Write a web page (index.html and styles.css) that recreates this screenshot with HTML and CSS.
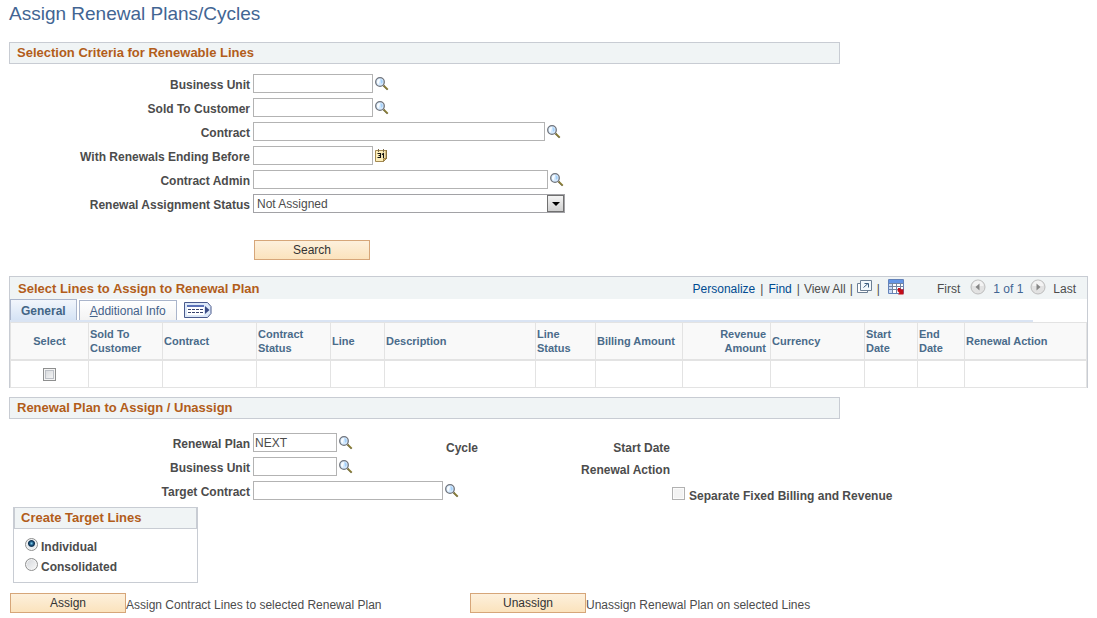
FILE: index.html
```html
<!DOCTYPE html>
<html lang="en">
	<head>
		<meta charset="UTF-8" />
		<meta name="viewport" content="width=device-width, initial-scale=1.0" />
		<title>Assign Renewal Plans/Cycles</title>
		<link rel="stylesheet" href="styles.css">
	</head>
	<body>
		<!-- Shared icons -->
		<svg class="icon-defs" width="0" height="0" aria-hidden="true">
			<symbol id="icon-lookup" viewBox="0 0 14 14">
				<path d="M8.500 8.500L12.700 12.700" stroke="#6e6530" stroke-width="1.9" />
				<path d="M9.500 8.900L12.600 12" stroke="#b5a74e" stroke-width="0.8" />
				<circle cx="5" cy="5" r="4.300" fill="#d5eafe" stroke="#70747c" stroke-width="1.300" />
				<path d="M2 5.500a3.200 3.200 0 0 1 3.200-3.500L3.500 7.800z" fill="#fafdff" />
				<path d="M5.500 2a3.200 3.200 0 0 1 2.300 3.300L6 7z" fill="#a5d1fb" />
			</symbol>
			<symbol id="icon-calendar" viewBox="0 0 14 14">
				<path d="M0.500 1.500h10.500v8l-2.500 3h-8z" fill="#fdeeba" stroke="#a48a52" />
				<path d="M8.500 12.500v-3h3z" fill="#d9b561" stroke="#8c7340" stroke-width="0.8" />
				<path d="M11.500 1v9" stroke="#8c7340" />
				<path d="M3.500 0v3M8.500 0v3" stroke="#7f6d4a" />
				<path d="M2.500 4.500h3v4h-3M3.500 6.500h2M7 5.500l1.500-1v4.500" fill="none" stroke="#111" stroke-width="1.1" />
			</symbol>
			<symbol id="icon-prev" viewBox="0 0 16 16">
				<circle cx="8" cy="8" r="7" fill="#e2e2e2" stroke="#bcbcbc" />
				<path d="M2.500 7a5.500 5.500 0 0 1 11 0z" fill="#f3f3f3" />
				<path d="M9.500 4.500v7l-4-3.500z" fill="#858585" />
			</symbol>
			<symbol id="icon-next" viewBox="0 0 16 16">
				<circle cx="8" cy="8" r="7" fill="#e2e2e2" stroke="#bcbcbc" />
				<path d="M2.500 7a5.500 5.500 0 0 1 11 0z" fill="#f3f3f3" />
				<path d="M6.500 4.500v7l4-3.500z" fill="#858585" />
			</symbol>
		</svg>

		<h1>Assign Renewal Plans/Cycles</h1>

		<form class="page-form">
			<section class="criteria">
				<h2 class="section-title">Selection Criteria for Renewable Lines</h2>
				<div class="fields">
					<div class="field">
						<label for="businessUnit">Business Unit</label>
						<input type="text" id="businessUnit" class="w-small" />
						<button type="button" class="icon-button" aria-label="Look up Business Unit"><svg><use href="#icon-lookup" /></svg></button>
					</div>
					<div class="field">
						<label for="soldTo">Sold To Customer</label>
						<input type="text" id="soldTo" class="w-small" />
						<button type="button" class="icon-button" aria-label="Look up Sold To Customer"><svg><use href="#icon-lookup" /></svg></button>
					</div>
					<div class="field">
						<label for="contract">Contract</label>
						<input type="text" id="contract" class="w-large" />
						<button type="button" class="icon-button" aria-label="Look up Contract"><svg><use href="#icon-lookup" /></svg></button>
					</div>
					<div class="field">
						<label for="endingBefore">With Renewals Ending Before</label>
						<input type="text" id="endingBefore" class="w-small" />
						<button type="button" class="icon-button" aria-label="Choose a date"><svg><use href="#icon-calendar" /></svg></button>
					</div>
					<div class="field">
						<label for="contractAdmin">Contract Admin</label>
						<input type="text" id="contractAdmin" class="w-xlarge" />
						<button type="button" class="icon-button" aria-label="Look up Contract Admin"><svg><use href="#icon-lookup" /></svg></button>
					</div>
					<div class="field">
						<label for="status">Renewal Assignment Status</label>
						<span class="select-box">
							<select id="status">
								<option>Not Assigned</option>
								<option>Assigned</option>
							</select>
							<span class="select-arrow"></span>
						</span>
					</div>
				</div>
				<button type="button" class="button search-button">Search</button>
			</section>

			<section class="lines">
				<div class="lines-header">
					<h2>Select Lines to Assign to Renewal Plan</h2>
					<div class="lines-tools">
						<a href="#">Personalize</a>
						<span>|</span>
						<a href="#">Find</a>
						<span>|</span>
						<span>View All</span>
						<span>|</span>
						<button type="button" class="tool-button" aria-label="Zoom">
							<svg width="16" height="16" viewBox="0 0 16 16">
								<path d="M3.500 4.500h-3v9h10v-2" fill="#fff" stroke="#6c7f94" />
								<path d="M3.500 1.500h11v10h-11z" fill="#f4f9fc" stroke="#6c7f94" />
								<path d="M6.500 8.500L11 4.500M7.500 4.500h4v4" fill="none" stroke="#3d5e80" />
							</svg>
						</button>
						<span>|</span>
						<button type="button" class="tool-button download" aria-label="Download">
							<svg width="17" height="16" viewBox="0 0 17 16">
								<path d="M0.500 0.500h15v14h-15z" fill="#fff" stroke="#6483ba" />
								<path d="M1 1h14v3h-14z" fill="#6495e6" />
								<path d="M1 4h4v10h-4z" fill="#c9dbf8" />
								<path d="M1 4.500h14M1 7.500h14M1 10.500h14M4.500 4v10M8.500 4v10M12.500 4v10" stroke="#7385a2" />
								<path d="M10 9l2 0 2 2 1.500-1.500v6H10l1.500-1.500-2-2z" fill="#c40d18" />
							</svg>
						</button>
					</div>
					<div class="pager">
						<span class="pager-first">First</span>
						<button type="button" class="tool-button" aria-label="Previous"><svg width="16" height="16"><use href="#icon-prev" /></svg></button>
						<span class="pager-count">1 of 1</span>
						<button type="button" class="tool-button" aria-label="Next"><svg width="16" height="16"><use href="#icon-next" /></svg></button>
						<span>Last</span>
					</div>
				</div>
				<div class="tabs">
					<button type="button" class="tab active">General</button>
					<button type="button" class="tab"><u>A</u>dditional Info</button>
					<button type="button" class="show-columns" aria-label="Show all columns">
						<svg width="28" height="16" viewBox="0 0 28 16">
							<path d="M0.500 0.500h23l3.500 4v7l-3.500 4h-23z" fill="#dce8f8" stroke="#4a5a8c" />
							<path d="M3 3h17v10h-17z" fill="#fff" />
							<path d="M3 3h17v2h-17z" fill="#5b72b8" />
							<path d="M4 7.500h15M4 10.500h15" stroke="#39456f" stroke-dasharray="3 1" />
							<path d="M21 4l4.500 4-4.500 4z" fill="#3a4b86" />
						</svg>
					</button>
				</div>
				<table class="lines-table">
					<colgroup>
						<col class="c-select" />
						<col class="c-sold" />
						<col class="c-contract" />
						<col class="c-cstatus" />
						<col class="c-line" />
						<col class="c-desc" />
						<col class="c-lstatus" />
						<col class="c-billing" />
						<col class="c-revenue" />
						<col class="c-currency" />
						<col class="c-start" />
						<col class="c-end" />
						<col class="c-action" />
					</colgroup>
					<thead>
						<tr>
							<th class="center">Select</th>
							<th>Sold To Customer</th>
							<th>Contract</th>
							<th>Contract Status</th>
							<th>Line</th>
							<th>Description</th>
							<th>Line Status</th>
							<th>Billing Amount</th>
							<th class="right">Revenue Amount</th>
							<th>Currency</th>
							<th>Start Date</th>
							<th>End Date</th>
							<th>Renewal Action</th>
						</tr>
					</thead>
					<tbody>
						<tr>
							<td class="center"><input type="checkbox" aria-label="Select line" /></td>
							<td></td>
							<td></td>
							<td></td>
							<td></td>
							<td></td>
							<td></td>
							<td></td>
							<td></td>
							<td></td>
							<td></td>
							<td></td>
							<td></td>
						</tr>
					</tbody>
				</table>
			</section>

			<section class="plan">
				<h2 class="section-title">Renewal Plan to Assign / Unassign</h2>
				<div class="plan-body">
					<div class="fields plan-fields">
						<div class="field">
							<label for="renewalPlan">Renewal Plan</label>
							<input type="text" id="renewalPlan" class="w-tiny" value="NEXT" />
							<button type="button" class="icon-button" aria-label="Look up Renewal Plan"><svg><use href="#icon-lookup" /></svg></button>
						</div>
						<div class="field">
							<label for="planUnit">Business Unit</label>
							<input type="text" id="planUnit" class="w-tiny" />
							<button type="button" class="icon-button" aria-label="Look up Business Unit"><svg><use href="#icon-lookup" /></svg></button>
						</div>
						<div class="field">
							<label for="targetContract">Target Contract</label>
							<input type="text" id="targetContract" class="w-medium" />
							<button type="button" class="icon-button" aria-label="Look up Target Contract"><svg><use href="#icon-lookup" /></svg></button>
						</div>
					</div>
					<div class="plan-details">
						<div class="detail-row">
							<span class="cycle">Cycle</span>
							<span class="detail">Start Date</span>
						</div>
						<div class="detail-row">
							<span class="detail">Renewal Action</span>
						</div>
						<label class="separate">
							<input type="checkbox" disabled />
							<span>Separate Fixed Billing and Revenue</span>
						</label>
					</div>
				</div>
			</section>

			<fieldset class="target-lines" aria-labelledby="targetTitle">
				<h2 id="targetTitle">Create Target Lines</h2>
				<div class="radios">
					<label><input type="radio" name="target" checked /><span>Individual</span></label>
					<label><input type="radio" name="target" /><span>Consolidated</span></label>
				</div>
			</fieldset>

			<div class="actions">
				<div class="action">
					<button type="button" class="button">Assign</button>
					<span>Assign Contract Lines to selected Renewal Plan</span>
				</div>
				<div class="action">
					<button type="button" class="button">Unassign</button>
					<span>Unassign Renewal Plan on selected Lines</span>
				</div>
			</div>
		</form>
	</body>
</html>
```
FILE: styles.css
```css
* {
	box-sizing: border-box;
}
body {
	margin: 0;
	padding: 3px 9px 0;
	background: #fff;
	color: #4c4c4c;
	font-family: "Liberation Sans", Arial, sans-serif;
	font-size: 12px;
	line-height: 14px;
}
button,
input,
select {
	font-family: inherit;
	font-size: 12px;
	color: #4c4c4c;
	margin: 0;
}
button {
	padding: 0;
	cursor: pointer;
}
.icon-defs {
	position: absolute;
}
h1 {
	margin: 0 0 17px;
	color: #426593;
	font-size: 19px;
	font-weight: normal;
	line-height: 22px;
}
h2 {
	margin: 0;
	color: #b25d1a;
	font-size: 13px;
	line-height: 20px;
}
.section-title {
	width: 77%;
	padding-left: 7px;
	background: #f0f4f5;
	border: 1px solid #c8ccd3;
}

/* Labelled fields */
.fields {
	display: flex;
	flex-direction: column;
	gap: 5px;
	padding-top: 10px;
}
.field {
	display: flex;
	align-items: center;
	height: 19px;
}
.field > * {
	flex-shrink: 0;
}
.field label {
	width: 241px;
	margin-right: 3px;
	padding-top: 3px;
	font-weight: bold;
	text-align: right;
}
.field input {
	height: 19px;
	padding: 0 1px;
	border: 1px solid #b3b3b3;
}
.w-tiny {
	width: 84px;
}
.w-small {
	width: 120px;
}
.w-medium {
	width: 190px;
}
.w-large {
	width: 292px;
}
.w-xlarge {
	width: 295px;
}
.icon-button,
.tool-button,
.show-columns {
	display: flex;
	border: 0;
	background: none;
}
.icon-button {
	margin-left: 2px;
}
.icon-button svg {
	width: 14px;
	height: 14px;
}
.select-box {
	position: relative;
}
.select-box select {
	display: block;
	width: 312px;
	height: 19px;
	padding: 0 20px 0 3px;
	appearance: none;
	background: #fff;
	border: 1px solid #a2a2a6;
	border-radius: 0;
}
.select-arrow {
	position: absolute;
	top: 1px;
	right: 1px;
	display: flex;
	align-items: center;
	justify-content: center;
	width: 17px;
	height: 17px;
	background: linear-gradient(#f4f4f4, #d0d0d0);
	border: 1px solid #707070;
	pointer-events: none;
}
.select-arrow::after {
	content: "";
	border: 4px solid transparent;
	border-top-color: #000;
	border-bottom: 0;
}

.button {
	width: 116px;
	height: 20px;
	background: linear-gradient(#fdf0dc, #fbe3bd);
	border: 1px solid #d6a679;
	color: #333;
}
.search-button {
	display: block;
	margin: 27px 0 16px 245px;
}

/* Grid of contract lines */
.lines {
	border: 1px solid #c8ccd3;
	border-bottom: 0;
}
.lines-header {
	display: flex;
	align-items: center;
	height: 22px;
	padding: 0 11px 0 8px;
	background: #f0f4f5;
}
.lines-header h2 {
	margin-right: auto;
	padding-top: 2px;
}
.lines-tools,
.pager {
	display: flex;
	align-items: center;
}
.lines-tools {
	gap: 4px;
	margin-right: 32px;
}
.lines-header span,
.lines-header a {
	padding-top: 2px;
}
.lines-tools a {
	padding-left: 1px;
	padding-right: 1px;
	color: #004b91;
	text-decoration: none;
}
.tool-button {
	margin-bottom: 3px;
}
.download {
	margin-left: 4px;
}
.pager {
	gap: 7px;
}
.pager-first {
	margin-right: 3px;
}
.pager-count {
	color: #426593;
}
.tabs {
	display: flex;
	align-items: flex-end;
	width: 95%;
	height: 23px;
	border-bottom: 2px solid #dae4f3;
}
.tab {
	height: 20px;
	margin-right: 2px;
	padding: 1px 10px 0;
	background: linear-gradient(#fff, #f3f3f3);
	border: 1px solid #aab5cb;
	border-bottom: 0;
	color: #44618a;
}
.tab.active {
	height: 21px;
	background: linear-gradient(#f2f6fc, #d5e3f5);
	color: #426586;
	font-weight: bold;
}
.show-columns {
	margin: 0 0 2px 5px;
}
.lines-table {
	width: 100%;
	table-layout: fixed;
	border-collapse: collapse;
	border: 1px solid #e3e3e3;
}
.lines-table th,
.lines-table td {
	padding: 0 1px;
	border: 1px solid #e3e3e3;
}
.lines-table th {
	height: 37px;
	background: #f9f9f9;
	border-bottom-width: 2px;
	color: #4a6b8a;
	font-size: 11px;
	text-align: left;
}
.lines-table td {
	height: 28px;
}
.lines-table .center {
	text-align: center;
}
.lines-table .right {
	padding: 0 4px;
	text-align: right;
}
.c-select {
	width: 78px;
}
.c-sold {
	width: 74px;
}
.c-contract,
.c-currency {
	width: 94px;
}
.c-cstatus {
	width: 74px;
}
.c-line {
	width: 54px;
}
.c-desc {
	width: 151px;
}
.c-lstatus {
	width: 60px;
}
.c-billing {
	width: 87px;
}
.c-revenue {
	width: 88px;
}
.c-start {
	width: 53px;
}
.c-end {
	width: 47px;
}

input[type="checkbox"],
input[type="radio"] {
	appearance: none;
	width: 13px;
	height: 13px;
	background: linear-gradient(135deg, #d2d5d9, #fafafa);
	border: 1px solid #8e8f8f;
	vertical-align: middle;
}
input[type="checkbox"] {
	box-shadow: inset 0 0 0 1px #f4f4f4, inset 0 0 0 2px #bcc0c6;
}
input[type="checkbox"]:disabled {
	background: #f3f3f3;
	border-color: #b1b1b1;
	box-shadow: inset 0 0 0 1px #fbfbfb;
}
input[type="radio"] {
	border-radius: 50%;
	box-shadow: inset 0 0 0 1px #f4f4f4;
}
input[type="radio"]:checked {
	background: radial-gradient(circle at 50% 40%, #7fd0f0 0, #17507c 2px, #11324f 3px, #e6ebef 4px);
}

/* Renewal plan */
.plan {
	margin-top: 9px;
}
.plan-body {
	display: flex;
	font-weight: bold;
}
.plan-fields {
	width: 412px;
	padding-top: 14px;
}
.plan-details {
	width: 500px;
	padding-top: 18px;
}
.detail-row {
	display: flex;
	height: 22px;
	padding-top: 4px;
}
.cycle {
	width: 57px;
	text-align: right;
}
.detail {
	width: 249px;
	text-align: right;
}
.cycle + .detail {
	width: 192px;
}
.separate {
	display: flex;
	gap: 4px;
	margin: 6px 0 0 251px;
}
.separate span {
	padding-top: 2px;
}

.target-lines {
	width: 185px;
	margin: 4px 0 10px 4px;
	padding: 0;
	border: 1px solid #c8ccd3;
}
.target-lines h2 {
	padding-left: 6px;
	background: #f0f4f5;
	border: 1px solid #c8ccd3;
	border-width: 0 1px 1px;
}
.radios {
	display: flex;
	flex-direction: column;
	gap: 4px;
	padding: 9px 11px 8px;
	font-weight: bold;
}
.radios label {
	display: flex;
	gap: 3px;
	height: 16px;
}
.radios span {
	padding-top: 2px;
}
.actions {
	display: flex;
	padding-left: 1px;
}
.action {
	display: flex;
	width: 460px;
}
.action span {
	padding-top: 5px;
}
```
